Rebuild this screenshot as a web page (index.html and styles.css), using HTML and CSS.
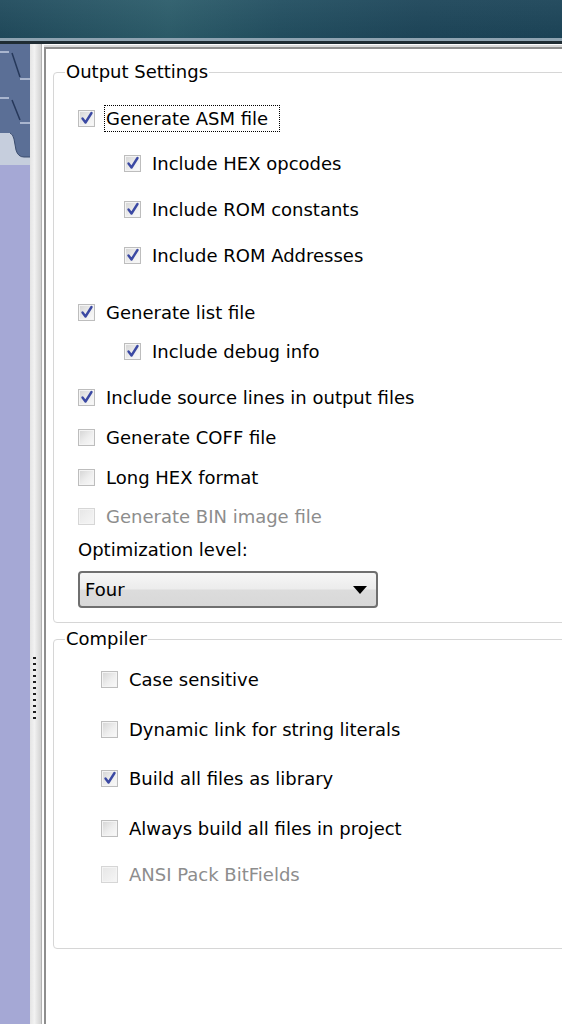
FILE: index.html
```html
<!DOCTYPE html>
<html>
<head>
<meta charset="utf-8">
<link rel="stylesheet" href="styles.css">
</head>
<body>
<div class="titlebar"></div>
<div class="main">
  <div class="sidebar">
    <svg class="tabs" width="30" height="121" viewBox="0 0 30 121">
      <rect width="30" height="121" fill="#5b6f96"/>
      <path d="M0 8 H9" stroke="#c3cde0" stroke-width="1.5"/>
      <path d="M12 9 L20 33" stroke="#26385a" stroke-width="1.5"/>
      <path d="M20 35 H30" stroke="#c3cde0" stroke-width="1.5"/>
      <path d="M0 54 H9" stroke="#c3cde0" stroke-width="1.5"/>
      <path d="M12 56 L20 76" stroke="#26385a" stroke-width="1.5"/>
      <path d="M20 79 H30" stroke="#c3cde0" stroke-width="1.5"/>
      <path d="M0 89 H10 Q13 90 14 95 L16 106 Q18 113 24 113 H30 V121 H0 Z" fill="#c6cedd"/>
      <path d="M10 89 Q13 90 14 95 L16 106 Q18 113 24 113 H30" fill="none" stroke="#3a4c6e" stroke-width="1"/>
    </svg>
    <div class="sidebar-fill"></div>
  </div>
  <div class="splitter"><div class="grip"></div></div>
  <div class="frame">
    <div class="panel">
      <fieldset class="group group-output">
        <legend>Output Settings</legend>
        <div class="row r-asm"><span class="cb on"><svg viewBox="0 0 16 16"><path d="M3.5 8.5 L6.5 12.5 L12.5 3" /></svg></span><span class="focus">Generate ASM file</span></div>
        <div class="row sub r-hex"><span class="cb on"><svg viewBox="0 0 16 16"><path d="M3.5 8.5 L6.5 12.5 L12.5 3" /></svg></span><span>Include HEX opcodes</span></div>
        <div class="row sub r-romc"><span class="cb on"><svg viewBox="0 0 16 16"><path d="M3.5 8.5 L6.5 12.5 L12.5 3" /></svg></span><span>Include ROM constants</span></div>
        <div class="row sub r-roma"><span class="cb on"><svg viewBox="0 0 16 16"><path d="M3.5 8.5 L6.5 12.5 L12.5 3" /></svg></span><span>Include ROM Addresses</span></div>
        <div class="row r-list"><span class="cb on"><svg viewBox="0 0 16 16"><path d="M3.5 8.5 L6.5 12.5 L12.5 3" /></svg></span><span>Generate list file</span></div>
        <div class="row sub r-debug"><span class="cb on"><svg viewBox="0 0 16 16"><path d="M3.5 8.5 L6.5 12.5 L12.5 3" /></svg></span><span>Include debug info</span></div>
        <div class="row r-src"><span class="cb on"><svg viewBox="0 0 16 16"><path d="M3.5 8.5 L6.5 12.5 L12.5 3" /></svg></span><span>Include source lines in output files</span></div>
        <div class="row r-coff"><span class="cb"></span><span>Generate COFF file</span></div>
        <div class="row r-long"><span class="cb"></span><span>Long HEX format</span></div>
        <div class="row r-bin disabled"><span class="cb"></span><span>Generate BIN image file</span></div>
        <div class="label r-opt">Optimization level:</div>
        <div class="select"><span>Four</span><svg class="arrow" width="14" height="8" viewBox="0 0 14 8"><path d="M0 0 H14 L7 8 Z" fill="#000"/></svg></div>
      </fieldset>
      <fieldset class="group group-compiler">
        <legend>Compiler</legend>
        <div class="row c-case"><span class="cb"></span><span>Case sensitive</span></div>
        <div class="row c-dyn"><span class="cb"></span><span>Dynamic link for string literals</span></div>
        <div class="row c-build"><span class="cb on"><svg viewBox="0 0 16 16"><path d="M3.5 8.5 L6.5 12.5 L12.5 3" /></svg></span><span>Build all files as library</span></div>
        <div class="row c-always"><span class="cb"></span><span>Always build all files in project</span></div>
        <div class="row c-ansi disabled"><span class="cb"></span><span>ANSI Pack BitFields</span></div>
      </fieldset>
    </div>
  </div>
</div>
</body>
</html>
```
FILE: styles.css
```css
html, body {
  margin: 0;
  padding: 0;
}
body {
  width: 562px;
  height: 1024px;
  overflow: hidden;
  background: #ffffff;
  font-family: "DejaVu Sans", Verdana, sans-serif;
  font-size: 18px;
  color: #000;
}
.titlebar {
  height: 44px;
  background:
    linear-gradient(to bottom, transparent 38px, #8ea3b1 38px, #8ea3b1 41px, #1f2c33 41px),
    linear-gradient(to bottom, rgba(255,255,255,0.05), rgba(0,0,0,0.05)),
    linear-gradient(to right, #1f4a5c 0%, #2b5c6a 30%, #214e60 50%, #1c4559 75%, #1b4458 100%);
}
.main {
  display: flex;
  height: 980px;
}
.sidebar {
  width: 30px;
  display: flex;
  flex-direction: column;
}
.tabs {
  display: block;
}
.sidebar-fill {
  flex: 1;
  background: #a5a8d5;
}
.splitter {
  width: 11px;
  background: linear-gradient(to right, #e4e4e4, #f2f2f2 40%, #d2d2d2);
  padding-top: 613px;
  box-sizing: border-box;
}
.grip {
  width: 3px;
  height: 64px;
  margin-left: 3px;
  background: repeating-linear-gradient(to bottom, #1e1e1e 0 2px, transparent 2px 6px);
}
.frame {
  flex: 1;
  border-left: 1px solid #b2b2b2;
  padding: 3px 0 0 2px;
  background: #fff;
}
.panel {
  height: 100%;
  border-top: 2px solid #8e8e8e;
  border-left: 2px solid #8e8e8e;
  box-shadow: 0 -2px 0 #dadada;
  padding-top: 10px;
  box-sizing: border-box;
}
.group {
  margin: 0 -20px 0 7px;
  border: 1px solid #d6d6d6;
  border-radius: 4px;
  padding: 0 0 0 24px;
  min-width: 0;
}
.group legend {
  margin-left: -13px;
  padding: 0 1px;
  line-height: 26px;
  height: 26px;
}
.row {
  display: flex;
  align-items: center;
  height: 26px;
  gap: 11px;
  white-space: nowrap;
}
.row.sub {
  margin-left: 46px;
}
.cb {
  width: 15px;
  height: 15px;
  flex: none;
  border: 1px solid #bdbdbd;
  background: linear-gradient(135deg, #d4d4d4, #eeeeee 55%, #fafafa);
  box-shadow: inset 0 0 0 1px #f4f4f4;
  display: flex;
  align-items: center;
  justify-content: center;
}
.cb svg {
  width: 16px;
  height: 16px;
  overflow: visible;
}
.cb svg path {
  fill: none;
  stroke: #3b49a3;
  stroke-width: 2.4;
  stroke-linecap: round;
  stroke-linejoin: round;
}
.disabled {
  color: #8d8d8d;
}
.disabled .cb {
  border-color: #d6d6d6;
  background: linear-gradient(135deg, #e6e6e6, #f6f6f6);
}
.focus {
  outline: 1px dotted #000;
  padding: 0 11px 0 1px;
  margin-left: -1px;
  line-height: 25px;
}
.r-asm { margin-top: 20px; }
.r-hex { margin-top: 19px; }
.r-romc { margin-top: 20px; }
.r-roma { margin-top: 20px; }
.r-list { margin-top: 31px; }
.r-debug { margin-top: 13px; }
.r-src { margin-top: 20px; }
.r-coff { margin-top: 14px; }
.r-long { margin-top: 14px; }
.r-bin { margin-top: 13px; }
.label {
  height: 26px;
  line-height: 26px;
}
.r-opt {
  margin-top: 8px;
  margin-left: -24px;
  padding-left: 24px;
}
.select {
  margin-top: 8px;
  margin-bottom: 14px;
  width: 300px;
  height: 37px;
  box-sizing: border-box;
  border: 2px solid #6f6f6f;
  border-radius: 4px;
  background: linear-gradient(to bottom, #f6f6f6 0%, #ececec 48%, #dcdcdc 52%, #d8d8d8 100%);
  display: flex;
  align-items: center;
  justify-content: space-between;
  padding: 0 9px 0 5px;
}
.group-compiler {
  margin-top: 3px;
  padding-left: 47px;
  padding-bottom: 61px;
}
.group-compiler legend {
  margin-left: -36px;
}
.c-case { margin-top: 14px; }
.c-dyn { margin-top: 24px; }
.c-build { margin-top: 23px; }
.c-always { margin-top: 24px; }
.c-ansi { margin-top: 20px; }
```
